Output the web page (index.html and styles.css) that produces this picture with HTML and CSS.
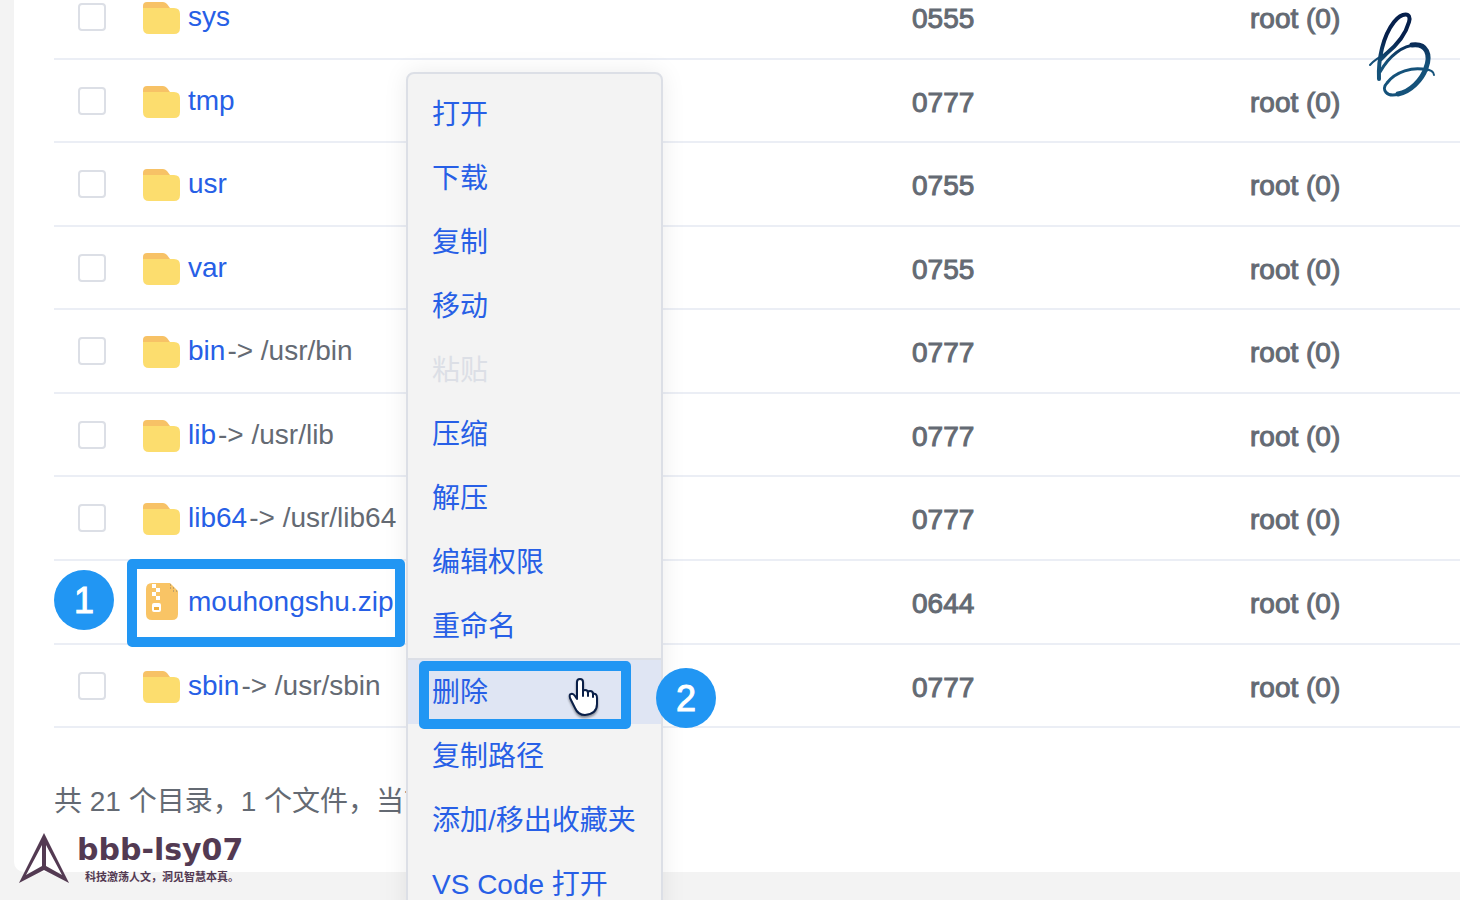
FILE: index.html
```
<!DOCTYPE html>
<html lang="zh-CN">
<head>
<meta charset="utf-8">
<title>文件管理</title>
<link rel="stylesheet" href="styles.css">
</head>
<body>
<svg class="defs" aria-hidden="true">
  <symbol id="folder" viewBox="0 0 37 32">
    <path fill="#f7c266" d="M0 8V4q0-4 4-4h16q2 0 4 2l3 4v4H0z"/>
    <path fill="#fcdd6e" d="M0 6h31q6 0 6 6v14q0 6-6 6H6q-6 0-6-6z"/>
  </symbol>
</svg>
<main class="card">
  <table class="files">
    <colgroup><col class="col-check"><col class="col-name"><col class="col-mode"><col class="col-owner"></colgroup>
    <tbody>
      <tr><td><input type="checkbox" aria-label="sys"></td><td><span class="name"><svg class="folder"><use href="#folder"/></svg><a href="#">sys</a></span></td><td class="meta">0555</td><td class="meta">root (0)</td></tr>
      <tr><td><input type="checkbox" aria-label="tmp"></td><td><span class="name"><svg class="folder"><use href="#folder"/></svg><a href="#">tmp</a></span></td><td class="meta">0777</td><td class="meta">root (0)</td></tr>
      <tr><td><input type="checkbox" aria-label="usr"></td><td><span class="name"><svg class="folder"><use href="#folder"/></svg><a href="#">usr</a></span></td><td class="meta">0755</td><td class="meta">root (0)</td></tr>
      <tr><td><input type="checkbox" aria-label="var"></td><td><span class="name"><svg class="folder"><use href="#folder"/></svg><a href="#">var</a></span></td><td class="meta">0755</td><td class="meta">root (0)</td></tr>
      <tr><td><input type="checkbox" aria-label="bin"></td><td><span class="name"><svg class="folder"><use href="#folder"/></svg><a href="#">bin</a><span class="target">-&gt; /usr/bin</span></span></td><td class="meta">0777</td><td class="meta">root (0)</td></tr>
      <tr><td><input type="checkbox" aria-label="lib"></td><td><span class="name"><svg class="folder"><use href="#folder"/></svg><a href="#">lib</a><span class="target">-&gt; /usr/lib</span></span></td><td class="meta">0777</td><td class="meta">root (0)</td></tr>
      <tr><td><input type="checkbox" aria-label="lib64"></td><td><span class="name"><svg class="folder"><use href="#folder"/></svg><a href="#">lib64</a><span class="target">-&gt; /usr/lib64</span></span></td><td class="meta">0777</td><td class="meta">root (0)</td></tr>
      <tr class="tall"><td></td><td><span class="name"><svg class="zip" viewBox="0 0 37 38">
        <path fill="#f9c465" d="M9 0h18l8 8v23q0 6-6 6H9q-6 0-6-6V6q0-6 6-6z"/>
        <path fill="#fff" d="M9 1h4v4H9zM13 5h4v4h-4zM9 9h4v4H9zM13 13h4v4h-4zM11 20h5q2 0 2 2v5q0 2-2 2h-5q-2 0-2-2v-5q0-2 2-2z"/>
        <path fill="#f0b040" d="M11 24h5v3h-5z"/>
        <path stroke="#87806f" stroke-dasharray="1 2" d="M27 2h1M27 5h4M30 8h4"/>
      </svg><a href="#">mouhongshu.zip</a></span></td><td class="meta">0644</td><td class="meta">root (0)</td></tr>
      <tr class="short"><td><input type="checkbox" aria-label="sbin"></td><td><span class="name"><svg class="folder"><use href="#folder"/></svg><a href="#">sbin</a><span class="target">-&gt; /usr/sbin</span></span></td><td class="meta">0777</td><td class="meta">root (0)</td></tr>
    </tbody>
  </table>
  <p class="summary">共 21 个目录，1 个文件，当前</p>
</main>

<svg class="monogram" viewBox="0 0 66 86" fill="none" stroke-linecap="round" stroke-linejoin="round">
  <defs><linearGradient id="ink" x1="0" y1="0" x2="0" y2="86" gradientUnits="userSpaceOnUse"><stop offset=".3" stop-color="#06204c"/><stop offset=".6" stop-color="#15527a"/></linearGradient></defs>
  <g stroke="url(#ink)">
    <path stroke-width="2" d="M1 53Q6 47 17 42"/>
    <path stroke-width="4" d="M10 67C9 47 14 24 25 10C33 0 43 0 40 10C37 21 28 33 17 42L12 47"/>
    <path stroke-width="3" d="M11 60C20 44 34 33 47 33"/>
    <path stroke-width="5" d="M43 33C58 31 62 43 57 56C53 68 41 80 29 82"/>
    <path stroke-width="3" d="M30 82C17 86 12 77 18 71C26 60 44 54 58 58"/>
    <path stroke-width="2" d="M55 57Q65 58 65 63"/>
  </g>
</svg>

<div class="brand">
  <svg class="arrow" viewBox="0 0 50 50"><path fill="#533a52" fill-rule="evenodd" d="M25 0L50 50L25 37L0 50zM23 12L7 42L23 33zM27 12V33L43 42z"/></svg>
  <div class="brand-text"><strong>bbb-lsy07</strong><span>科技激荡人文，洞见智慧本真。</span></div>
</div>

<nav class="menu">
  <button>打开</button>
  <button>下载</button>
  <button>复制</button>
  <button>移动</button>
  <button disabled>粘贴</button>
  <button>压缩</button>
  <button>解压</button>
  <button>编辑权限</button>
  <button>重命名</button>
  <button class="active">删除</button>
  <button>复制路径</button>
  <button>添加/移出收藏夹</button>
  <button>VS Code 打开</button>
</nav>

<div class="frame frame-file"></div>
<div class="frame frame-delete"></div>
<div class="step step-one">1</div>
<div class="step step-two">2</div>
<svg class="pointer" viewBox="0 0 30 40"><path fill="#fff" stroke="#0a1f48" stroke-width="2" stroke-linejoin="round" d="M9 22V5q0-3 3-3t3 3v10q0-2 2-2 3 0 3 3 0-2 2-2 3 0 3 3 4-1 4 4v6q0 10-12 11-7 0-10-7l-5-10q-1-4 1-4 2-1 4 2z"/><path fill="none" stroke="#0a1f48" stroke-width="2" stroke-linecap="round" d="M15 14v5M20 16v3M25 17v3"/></svg>
</body>
</html>
```
FILE: styles.css
```
* { box-sizing: border-box; }
body {
  margin: 0;
  height: 100vh;
  overflow: hidden;
  position: relative;
  background: #f3f3f3;
  color: #646a73;
  font: 28px/36px "Liberation Sans", "Noto Sans CJK SC", sans-serif;
}
.defs { position: absolute; width: 0; height: 0; }
.card {
  margin-left: 14px;
  padding: 0 0 52px 40px;
  background: #fff;
  border-bottom-left-radius: 10px;
  overflow: hidden;
}
.files {
  width: 100%;
  margin-top: -24px;
  table-layout: fixed;
  border-collapse: separate;
  border-spacing: 0;
}
.col-check { width: 89px; }
.col-name { width: 769px; }
.col-mode { width: 338px; }
.files tr { height: 84px; }
.files tr:nth-child(even) { height: 83px; }
.files .tall:nth-child(n) { height: 84px; }
.files .short:nth-child(n) { height: 83px; }
.files td { padding: 0; border-bottom: 2px solid #ebeef5; vertical-align: middle; }
.files td:first-child { padding-left: 24px; }
.files input {
  display: block;
  appearance: none;
  width: 28px;
  height: 28px;
  margin: 0;
  border: 2px solid #dcdfe6;
  border-radius: 4px;
  background: #fff;
}
.name { display: flex; align-items: center; white-space: pre; }
.name a { color: #275fe6; text-decoration: none; }
.target { margin-left: 2px; }
.folder { width: 37px; height: 32px; margin: 2px 8px 0 0; }
.zip { width: 37px; height: 38px; margin-right: 8px; }
.files .meta { padding-top: 4px; -webkit-text-stroke: 1px #646a73; }
.summary { margin: 56px 0 0; }

.monogram { position: absolute; top: 12px; right: 25px; width: 66px; height: 86px; }

.brand { position: absolute; left: 19px; bottom: 16px; display: flex; align-items: center; gap: 8px; color: #533a52; }
.arrow { width: 50px; height: 50px; }
.brand-text { display: flex; flex-direction: column; }
.brand strong { font: 700 30px/36px "DejaVu Sans", sans-serif; }
.brand span { padding-left: 8px; font: 700 11px/16px "Noto Sans CJK SC", sans-serif; }

.menu {
  position: absolute;
  top: 72px;
  left: 406px;
  width: 257px;
  padding: 8px 0;
  border: 2px solid #dcdfe6;
  border-radius: 8px;
  background: #f3f3f3;
  box-shadow: 0 0 24px rgba(0, 0, 0, .08);
}
.menu button {
  display: block;
  width: 100%;
  padding: 15px 24px 13px;
  border: 0;
  background: none;
  color: #275fe6;
  font: inherit;
  text-align: left;
  white-space: nowrap;
}
.menu button:disabled { color: #dcdfe6; }
.menu .active { border-top: 2px solid #dcdfe6; background: #dfe5f3; }

.frame { position: absolute; border: 10px solid #2196f3; border-radius: 5px; }
.frame-file { left: 127px; top: 559px; width: 278px; height: 88px; }
.frame-delete { left: 419px; top: 661px; width: 212px; height: 68px; }
.step {
  position: absolute;
  width: 60px;
  height: 60px;
  border-radius: 50%;
  background: #2196f3;
  color: #fff;
  font-size: 36px;
  line-height: 62px;
  text-align: center;
  -webkit-text-stroke: 1px #fff;
}
.step-one { left: 54px; top: 570px; }
.step-two { left: 656px; top: 668px; }
.pointer { position: absolute; left: 568px; top: 677px; width: 30px; height: 40px; filter: drop-shadow(0 2px 1px rgba(0, 0, 0, .4)); }
```
